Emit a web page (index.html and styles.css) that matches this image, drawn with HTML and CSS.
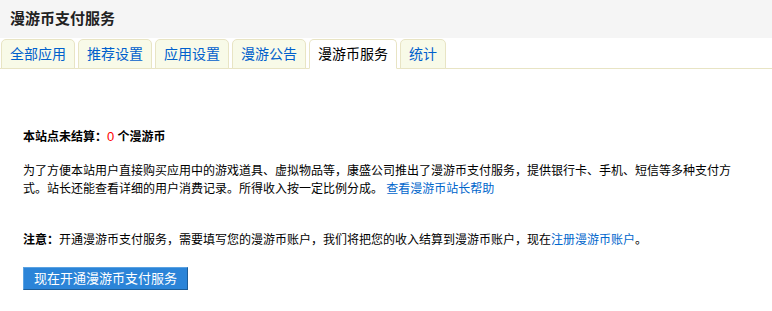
FILE: index.html
```html
<!DOCTYPE html>
<html lang="zh-CN">
<head>
<meta charset="utf-8">
<title>漫游币支付服务</title>
<link rel="stylesheet" href="styles.css">
</head>
<body>
<div class="header"><h1 class="title">漫游币支付服务</h1></div>
<ul class="tabs">
  <li class="tab"><a href="#">全部应用</a></li>
  <li class="tab"><a href="#">推荐设置</a></li>
  <li class="tab"><a href="#">应用设置</a></li>
  <li class="tab"><a href="#">漫游公告</a></li>
  <li class="tab active"><a href="#">漫游币服务</a></li>
  <li class="tab"><a href="#">统计</a></li>
</ul>
<div class="content">
  <p class="balance">本站点未结算：<span class="num">0</span> 个漫游币</p>
  <p class="desc">为了方便本站用户直接购买应用中的游戏道具、虚拟物品等，康盛公司推出了漫游币支付服务，提供银行卡、手机、短信等多种支付方式。站长还能查看详细的用户消费记录。所得收入按一定比例分成。 <a href="#">查看漫游币站长帮助</a></p>
  <p class="note"><b>注意：</b>开通漫游币支付服务，需要填写您的漫游币账户，我们将把您的收入结算到漫游币账户，现在<a href="#">注册漫游币账户</a>。</p>
  <button class="btn" type="button">现在开通漫游币支付服务</button>
</div>
</body>
</html>
```
FILE: styles.css
```css
html, body {
  margin: 0;
  padding: 0;
  background: #fff;
  font-family: "Liberation Sans", "Noto Sans CJK SC", sans-serif;
  color: #000;
}
.header {
  background: #f5f5f5;
  height: 38px;
  display: flex;
  align-items: center;
  padding-left: 10px;
}
.title {
  margin: 0;
  font-size: 15px;
  font-weight: bold;
  color: #222;
  line-height: 20px;
}
.tabs {
  list-style: none;
  margin: 1px 0 0;
  padding: 0 0 0 1px;
  display: flex;
  gap: 3px;
  border-bottom: 1px solid #e8e4c4;
  height: 29px;
}
.tab {
  background: #f8fae8;
  border: 1px solid #e8e4c4;
  border-radius: 5px 5px 0 0;
  height: 28px;
  padding: 0 8px;
  display: flex;
  align-items: center;
  font-size: 14px;
}
.tab a {
  color: #0060cc;
  text-decoration: none;
  line-height: 16px;
}
.tab.active {
  background: #fff;
  border-bottom-color: #fff;
}
.tab.active a {
  color: #000;
}
.content {
  padding: 59px 35px 0 23px;
  font-size: 12px;
  line-height: 18px;
}
.content p {
  margin: 0;
}
.balance {
  font-weight: bold;
}
.num {
  color: #f00;
  font-weight: normal;
  font-size: 13px;
}
.desc {
  padding-top: 16px;
}
.note {
  padding-top: 33px;
}
.content a {
  color: #0066cc;
  text-decoration: none;
}
.btn {
  display: block;
  margin-top: 18px;
  width: 165px;
  height: 23px;
  background: #2b84d8;
  color: #fff;
  font-family: "Liberation Sans", "Noto Sans CJK SC", sans-serif;
  font-size: 13px;
  line-height: 21px;
  padding: 0;
  border: 1px solid;
  border-color: #5aa2e2 #1d5c96 #1d5c96 #5aa2e2;
  cursor: pointer;
}
```
